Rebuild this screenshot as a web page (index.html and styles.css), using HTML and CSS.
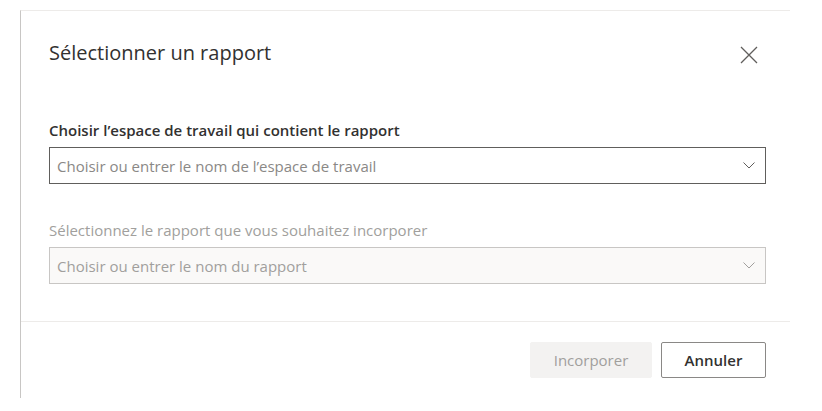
FILE: index.html
```html
<!DOCTYPE html>
<html lang="fr">
<head>
    <meta charset="UTF-8">
    <meta name="viewport" content="width=device-width, initial-scale=1.0">
    <title>Sélectionner un rapport</title>
    <link rel="stylesheet" href="styles.css">
</head>
<body>
    <div class="dialog">
        <div class="dialog-header">
            <h1 class="dialog-title">Sélectionner un rapport</h1>
            <button class="close-button" aria-label="Fermer">
                <svg width="18" height="18" viewBox="0 0 18 18">
                    <path d="M1 1 L17 17 M17 1 L1 17" stroke="#605e5c" stroke-width="1.3" fill="none"/>
                </svg>
            </button>
        </div>

        <div class="dialog-body">
            <div class="field">
                <label class="field-label">Choisir l’espace de travail qui contient le rapport</label>
                <div class="dropdown">
                    <span class="dropdown-text">Choisir ou entrer le nom de l’espace de travail</span>
                    <svg class="chevron" width="12" height="7" viewBox="0 0 12 7">
                        <path d="M0.5 0.5 L6 6 L11.5 0.5" stroke="#605e5c" stroke-width="1" fill="none"/>
                    </svg>
                </div>
            </div>

            <div class="field field-disabled">
                <label class="field-label">Sélectionnez le rapport que vous souhaitez incorporer</label>
                <div class="dropdown">
                    <span class="dropdown-text">Choisir ou entrer le nom du rapport</span>
                    <svg class="chevron" width="12" height="7" viewBox="0 0 12 7">
                        <path d="M0.5 0.5 L6 6 L11.5 0.5" stroke="#a19f9d" stroke-width="1" fill="none"/>
                    </svg>
                </div>
            </div>
        </div>

        <div class="dialog-footer">
            <button class="btn btn-primary" disabled>Incorporer</button>
            <button class="btn btn-default">Annuler</button>
        </div>
    </div>
</body>
</html>
```

FILE: styles.css
```css
body {
    margin: 0;
    background-color: #fff;
    font-family: "Open Sans", "Noto Sans", Arial, sans-serif;
    color: #323130;
}
.dialog {
    width: 770px;
    margin: 10px 0 0 20px;
    box-sizing: border-box;
    border-top: 1px solid #edebe9;
    border-left: 1px solid #c8c6c4;
    background-color: #fff;
}
.dialog-header {
    display: flex;
    justify-content: space-between;
    align-items: center;
    padding: 28px 32px 0 28px;
}
.dialog-title {
    margin: 0;
    font-size: 20px;
    font-weight: 400;
    line-height: 28px;
    color: #323130;
}
.close-button {
    margin-top: 4px;
    padding: 0;
    border: none;
    background: none;
    width: 18px;
    height: 18px;
    cursor: pointer;
}
.close-button svg {
    display: block;
}
.dialog-body {
    padding: 53px 24px 0 28px;
}
.field + .field {
    margin-top: 36px;
}
.field-label {
    display: block;
    font-size: 15px;
    font-weight: 600;
    line-height: 20px;
    margin-bottom: 7px;
    color: #323130;
}
.dropdown {
    display: flex;
    align-items: center;
    justify-content: space-between;
    height: 37px;
    box-sizing: border-box;
    padding: 0 10px 0 7px;
    border: 1px solid #605e5c;
    background-color: #fff;
}
.dropdown-text {
    font-size: 15px;
    color: #8a8886;
}
.chevron {
    display: block;
}
.field-disabled .field-label {
    font-weight: 400;
    color: #a19f9d;
}
.field-disabled .dropdown {
    border-color: #c8c6c4;
    background-color: #faf9f8;
}
.field-disabled .dropdown-text {
    color: #a19f9d;
}
.dialog-footer {
    display: flex;
    justify-content: flex-end;
    gap: 9px;
    margin-top: 37px;
    padding: 20px 24px 20px 0;
    border-top: 1px solid #edebe9;
}
.btn {
    height: 36px;
    box-sizing: border-box;
    font-family: inherit;
    font-size: 15px;
    border-radius: 2px;
    cursor: pointer;
}
.btn-primary {
    width: 122px;
    border: 1px solid #f3f2f1;
    background-color: #f3f2f1;
    color: #a19f9d;
    cursor: default;
}
.btn-default {
    width: 105px;
    border: 1px solid #8a8886;
    background-color: #fff;
    color: #323130;
    font-weight: 600;
}
```
